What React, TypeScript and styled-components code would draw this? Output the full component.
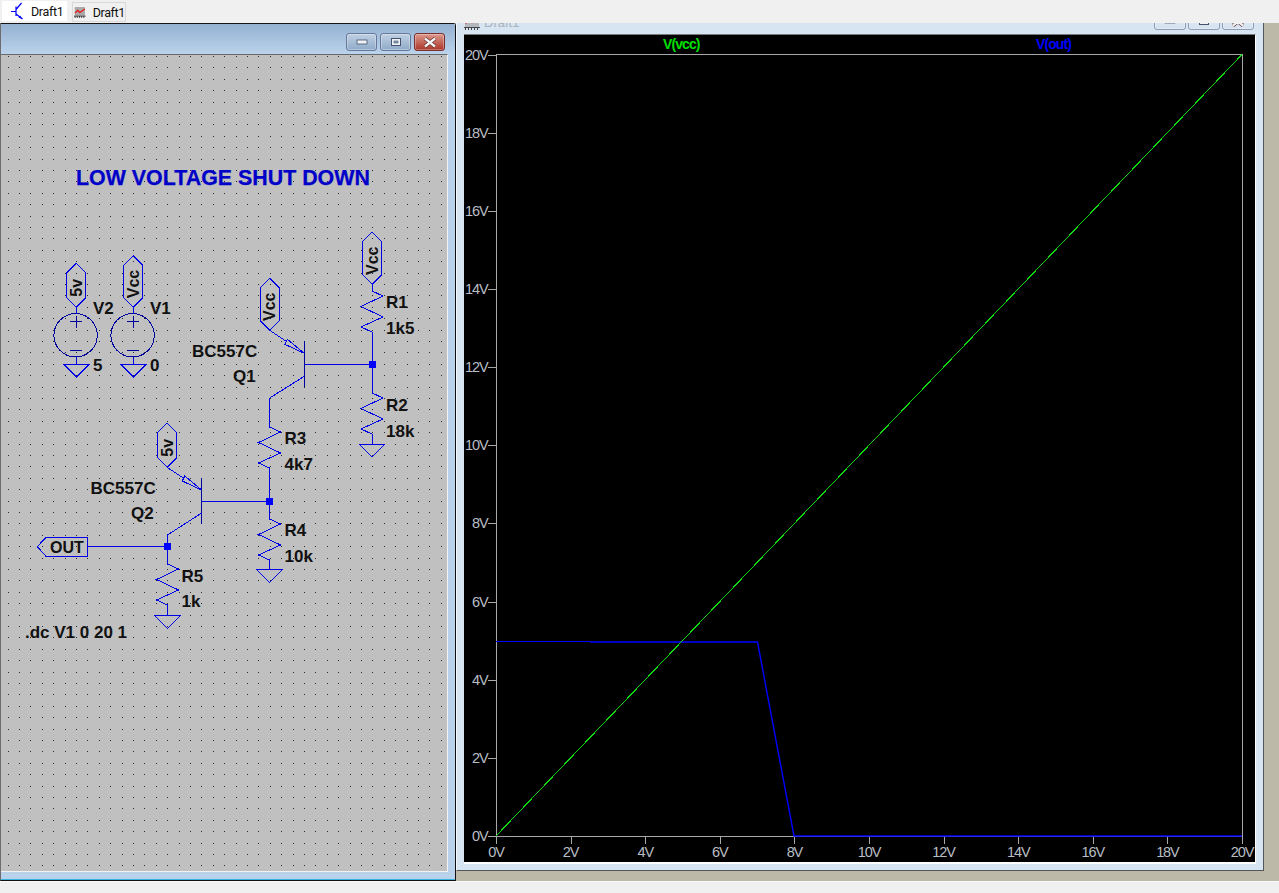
import React from 'react';
import styled, { createGlobalStyle } from 'styled-components';

const GlobalStyle = createGlobalStyle`
    html, body {
        margin: 0;
        padding: 0;
        background: #f0f0f0;
    }
    body {
        font-family: "Liberation Sans", Arial, sans-serif;
    }
`;

const BLUE = '#0000e6';

const Page = styled.div`
    width: 1279px;
    height: 893px;
    display: flex;
    flex-direction: column;
    overflow: hidden;
    background: #f0f0f0;
`;

const TabBar = styled.div`
    height: 23px;
    flex: none;
    display: flex;
    align-items: flex-start;
    gap: 5px;
    padding: 1px 0 0 2px;
    box-sizing: border-box;
    background: #f0f0f0;
    position: relative;
    z-index: 2;
`;

const Tab = styled.div<{ $active?: boolean }>`
    height: 20px;
    width: ${props => (props.$active ? '65px' : '54px')};
    margin-top: ${props => (props.$active ? '0' : '1px')};
    display: flex;
    align-items: center;
    gap: ${props => (props.$active ? '6px' : '7px')};
    padding-left: ${props => (props.$active ? '9px' : '1px')};
    box-sizing: border-box;
    background: ${props => (props.$active ? '#ffffff' : '#f0f0f0')};
    border: ${props => (props.$active ? 'none' : '1px solid #d9d9d9')};
    font-family: Roboto, "Liberation Sans", sans-serif;
    font-size: 12.5px;
    letter-spacing: -0.35px;
    color: #111;
`;

const Workspace = styled.div`
    height: 858px;
    flex: none;
    display: flex;
    align-items: flex-start;
    background: #bdb9a8;
`;

const StatusBar = styled.div`
    flex: 1;
    background: #f0f0f0;
    border-top: 1px solid #fafafa;
`;

const SchematicWindow = styled.div`
    width: 456px;
    height: 858px;
    flex: none;
    display: flex;
    flex-direction: column;
    box-sizing: border-box;
    background: #b9d1ea;
    border-top: 1px solid #141414;
    border-right: 1px solid #101010;
    border-bottom: 1px solid #101010;
    border-left: 1px solid #6d6d6d;
    border-top-right-radius: 3px;
    box-shadow: inset 0 -1px 0 #35b4e0;
`;

const TitleBar = styled.div`
    height: 30px;
    flex: none;
    display: flex;
    justify-content: flex-end;
    align-items: flex-start;
    gap: 3px;
    padding: 9px 10px 0 0;
    box-sizing: border-box;
    background: linear-gradient(#95b1d1, #bbd3eb);
`;

const Canvas = styled.div`
    width: 446px;
    height: 816px;
    flex: none;
    box-sizing: content-box;
    background: #c0c0c0;
    border-top: 1px solid #6a6a6a;
    border-bottom: 1px solid #f2f2f2;
    border-right: 1px solid #f2f2f2;

    svg {
        display: block;
    }
`;

const tones = {
    normal: { top: '#c0d0e3', bottom: '#8fabc9', edge: '#66799a' },
    close: { top: '#dc9a8c', bottom: '#ac3527', edge: '#77302f' },
    faded: { top: '#e6eef7', bottom: '#d5e1ef', edge: '#8d9cb4' },
};

const WindowButton = styled.div<{ $tone: keyof typeof tones }>`
    width: ${props => (props.$tone === 'faded' ? '32px' : '31px')};
    height: 18px;
    flex: none;
    display: flex;
    align-items: center;
    justify-content: center;
    box-sizing: border-box;
    border-radius: 3px;
    border: 1px solid ${props => tones[props.$tone].edge};
    background: linear-gradient(${props => tones[props.$tone].top}, ${props => tones[props.$tone].bottom});
    box-shadow: inset 0 0 0 1px rgba(255, 255, 255, 0.3);
`;

const PlotWindow = styled.div`
    width: 808px;
    height: 848px;
    flex: none;
    display: flex;
    flex-direction: column;
    box-sizing: border-box;
    padding: 0 7px 7px 7px;
    background: #d7e4f2;
    border-left: 1px solid #f4f8fc;
    border-right: 1px solid #55565a;
    border-bottom: 1px solid #55565a;
`;

const PlotTitle = styled.div`
    height: 11px;
    flex: none;
    display: flex;
    align-items: flex-end;
    overflow: hidden;
`;

const PlotCaption = styled.div`
    display: flex;
    align-items: center;
    gap: 4px;
    height: 16px;
    margin-bottom: 4px;
    font-size: 13px;
    color: #a9b2bc;
`;

const PlotButtons = styled.div`
    display: flex;
    gap: 2px;
    margin: 0 2px 4px auto;
`;

const PlotCanvas = styled.div`
    width: 791px;
    height: 827px;
    flex: none;
    background: #000;
    border-top: 1px solid #77797c;
    border-right: 1px solid #fff;
    border-bottom: 2px solid #fff;

    svg {
        display: block;
    }
`;

const Part = styled.text<{ $size?: number }>`
    font-family: "Liberation Sans", Arial, sans-serif;
    font-weight: 700;
    font-size: ${props => props.$size ?? 17}px;
    fill: #111;
`;

const Title = styled.text`
    font-family: "Liberation Sans", Arial, sans-serif;
    font-weight: 700;
    font-size: 21.4px;
    fill: #0000c8;
    stroke: #0000c8;
    stroke-width: 0.25px;
`;

const AxisLabel = styled.text`
    font-family: "Liberation Sans", Arial, sans-serif;
    font-size: 14.5px;
    letter-spacing: -1.1px;
    fill: #b8bec6;
`;

const TraceLabel = styled.text<{ $color: string }>`
    font-family: "Liberation Sans", Arial, sans-serif;
    font-weight: 700;
    font-size: 14px;
    letter-spacing: -0.9px;
    fill: ${props => props.$color};
`;

const Wire = ({ d, width = 1 }: { d: string; width?: number }) => (
    <path d={d} fill="none" stroke={BLUE} strokeWidth={width} />
);

const Junction = ({ x, y }: { x: number; y: number }) => (
    <rect x={x - 3.5} y={y - 3.5} width={7} height={7} fill="#0000ff" />
);

const Ground = ({ x, y }: { x: number; y: number }) => (
    <path d={`M${x - 13} ${y}H${x + 13}L${x} ${y + 13}Z`} fill="none" stroke={BLUE} />
);

// x, y = the top end of the resistor lead
const Resistor = ({ x, y }: { x: number; y: number }) => (
    <Wire
        d={`M${x} ${y}L${x + 11} ${y + 5}L${x - 11} ${y + 15.5}L${x + 11} ${y + 26}L${x - 11} ${y + 36}L${x} ${y + 41}`}
    />
);

const Flag = ({ x, top, bottom, text }: { x: number; top: number; bottom: number; text: string }) => (
    <>
        <path
            d={`M${x} ${top}L${x + 9.5} ${top + 9.5}V${bottom - 9.5}L${x} ${bottom}L${x - 9.5} ${bottom - 9.5}V${top + 9.5}Z`}
            fill="none"
            stroke={BLUE}
        />
        <Part
            $size={16}
            textAnchor="middle"
            transform={`translate(${x + 5.5} ${(top + bottom) / 2 + 2.5}) rotate(-90)`}
        >
            {text}
        </Part>
    </>
);

const Source = ({ x }: { x: number }) => (
    <>
        <circle cx={x - 0.7} cy={335.3} r={21.7} fill="none" stroke="#00009c" />
        <path d={`M${x - 6} 321.5H${x + 6}M${x} 315.5V327.5M${x - 6} 350.5H${x + 6}`} stroke="#00009c" fill="none" />
        <Wire d={`M${x} 307V314M${x} 357V364`} />
        <Ground x={x} y={364} />
    </>
);

const Transistor = ({ x, y, emitX, emitY, collX, collY }: {
    x: number; y: number; emitX: number; emitY: number; collX: number; collY: number;
}) => (
    <>
        <path d={`M${x} ${y - 23}V${y + 23}`} stroke="#00009c" fill="none" />
        <Wire d={`M${emitX} ${emitY}L${x} ${y - 11}M${x} ${y + 12}L${collX} ${collY}`} />
        <path
            d={`M${x} ${y - 11}L${x - 17} ${y - 25}L${x - 19.5} ${y - 20}Z`}
            fill="#c0c0c0"
            stroke={BLUE}
        />
    </>
);

const gridDots = () => {
    let d = '';
    for (let row = 0; row < 72; row++) {
        for (let col = 0; col < 39; col++) {
            d += `M${Math.round(7.6 + col * 11.4)} ${Math.round(56 + row * 11.4)}h1v1h-1z`;
        }
    }
    return d;
};

const Schematic = () => (
    <svg width={446} height={816} viewBox="1 55 446 816" shapeRendering="crispEdges">
        <path d={gridDots()} fill="#2a2a2a" />

        <Title x={76} y={185}>LOW VOLTAGE SHUT DOWN</Title>

        <Flag x={76.3} top={263.3} bottom={307.3} text="5v" />
        <Source x={76.3} />
        <Part x={93} y={314}>V2</Part>
        <Part x={93} y={371}>5</Part>

        <Flag x={133.3} top={255.7} bottom={307.3} text="Vcc" />
        <Source x={133.3} />
        <Part x={150} y={314}>V1</Part>
        <Part x={150} y={371}>0</Part>

        <Flag x={372} top={232.3} bottom={284.3} text="Vcc" />
        <Wire d="M372 284V291M372 332V393M372 434V444" />
        <Resistor x={372} y={291} />
        <Resistor x={372} y={393} />
        <Ground x={372} y={444} />
        <Junction x={372} y={364} />
        <Part x={386} y={308}>R1</Part>
        <Part x={386} y={334}>1k5</Part>
        <Part x={386} y={411}>R2</Part>
        <Part x={386} y={437}>18k</Part>

        <Flag x={269.7} top={278.3} bottom={330.3} text="Vcc" />
        <Transistor x={304.3} y={364.3} emitX={269.7} emitY={330.3} collX={269.7} collY={398} />
        <Wire d="M304.3 364.3H372M269.7 398V427M269.5 468V519M269.5 560V569" />
        <Part x={192} y={357}>BC557C</Part>
        <Part x={233} y={382}>Q1</Part>
        <Resistor x={269.5} y={427} />
        <Part x={284.5} y={444}>R3</Part>
        <Part x={284.5} y={470}>4k7</Part>

        <Junction x={269.5} y={501} />
        <Resistor x={269.5} y={519} />
        <Ground x={269.5} y={569.5} />
        <Part x={284.5} y={536}>R4</Part>
        <Part x={284.5} y={562}>10k</Part>

        <Flag x={167} top={423.3} bottom={467.3} text="5v" />
        <Transistor x={201.7} y={501} emitX={167} emitY={467.3} collX={167.5} collY={535} />
        <Wire d="M201.7 501H269.5M167.5 535V564M87.7 546.5H167.5M167.5 605V616" />
        <Part x={90.5} y={494}>BC557C</Part>
        <Part x={131} y={519}>Q2</Part>

        <Junction x={167.5} y={546.5} />
        <Resistor x={167.5} y={564} />
        <Ground x={167.5} y={615.5} />
        <Part x={181.5} y={582}>R5</Part>
        <Part x={181.5} y={607}>1k</Part>

        <path d="M37.3 546.7L46 537.3H87.7V556.3H46Z" fill="none" stroke={BLUE} />
        <Part $size={16} x={50} y={553}>OUT</Part>

        <Part x={25} y={638}>.dc V1 0 20 1</Part>
    </svg>
);

const PLOT_LEFT = 496;
const PLOT_RIGHT = 1242;
const PLOT_TOP = 54.5;
const PLOT_BOTTOM = 836;
const volts = Array.from({ length: 11 }, (_, i) => i * 2);

const Plot = () => (
    <svg width={791} height={827} viewBox="464 35 791 827">
        <g stroke="#a8a8a8" fill="none" shapeRendering="crispEdges">
            <rect x={PLOT_LEFT} y={PLOT_TOP} width={PLOT_RIGHT - PLOT_LEFT} height={PLOT_BOTTOM - PLOT_TOP} />
            {volts.map(v => {
                const x = Math.round(PLOT_LEFT + (v / 20) * (PLOT_RIGHT - PLOT_LEFT));
                const y = Math.round(PLOT_BOTTOM - (v / 20) * (PLOT_BOTTOM - PLOT_TOP));
                return (
                    <path key={v} d={`M${x} ${PLOT_BOTTOM}v8M${PLOT_LEFT} ${y}h-8`} />
                );
            })}
        </g>

        {volts.map(v => {
            const x = PLOT_LEFT + (v / 20) * (PLOT_RIGHT - PLOT_LEFT);
            const y = PLOT_BOTTOM - (v / 20) * (PLOT_BOTTOM - PLOT_TOP);
            return (
                <React.Fragment key={v}>
                    <AxisLabel x={x} y={857} textAnchor="middle">{v}V</AxisLabel>
                    <AxisLabel x={487.5} y={y + 5} textAnchor="end">{v}V</AxisLabel>
                </React.Fragment>
            );
        })}

        <TraceLabel x={663} y={49} $color="#00e000">V(vcc)</TraceLabel>
        <TraceLabel x={1036} y={49} $color="#0000ff">V(out)</TraceLabel>

        <g fill="none" stroke="#0000ff">
            <path d="M496 641.5H590" shapeRendering="crispEdges" />
            <path d="M590 642H757.5L794 836H1242" strokeWidth={1.4} />
        </g>
        <path d="M496 836L1242 54.5" stroke="#10d810" fill="none" shapeRendering="crispEdges" />
    </svg>
);

const SchematicIcon = () => (
    <svg width={14} height={18} viewBox="0 0 14 18">
        <path
            d="M0 9.5H5M5 4.5V14M5 7.5L10.5 1M5 12L11.5 17"
            stroke="#0000ff"
            strokeWidth={1.2}
            fill="none"
        />
        <path d="M9 13.5L11.5 17L7.5 15.5Z" fill="#0000ff" />
    </svg>
);

const PlotIcon = ({ faded }: { faded?: boolean }) => (
    <svg width={16} height={15} viewBox="0 0 16 15" opacity={faded ? 0.75 : 1}>
        <rect x={1} y={0} width={14} height={12} fill="#a9a9a9" />
        <path d="M1.5 8.5L5 4.5L8 7.5L11 5.5L15 2.5" stroke="#ee1010" strokeWidth={1.6} fill="none" />
        <path d="M0 12.5H16M1.5 12.5V15M4.5 12.5V15M7.5 12.5V15M10.5 12.5V15M13.5 12.5V15" stroke="#111" fill="none" />
    </svg>
);

const MinimizeGlyph = () => (
    <svg width={12} height={6} viewBox="0 0 12 6">
        <rect x={1} y={1} width={10} height={4} fill="#eef2f7" stroke="#45526a" strokeWidth={0.8} />
    </svg>
);

const MaximizeGlyph = () => (
    <svg width={12} height={10} viewBox="0 0 12 10">
        <rect x={1.5} y={1.5} width={9} height={7} fill="#eef2f7" stroke="#45526a" />
        <rect x={4} y={4} width={4} height={2} fill="#8fa6c2" stroke="#45526a" strokeWidth={0.6} />
    </svg>
);

const CloseGlyph = () => (
    <svg width={16} height={11} viewBox="0 0 16 11">
        <path d="M3 1.5L13 9.5M13 1.5L3 9.5" stroke="#5b2a2a" strokeWidth={3.6} />
        <path d="M3 1.5L13 9.5M13 1.5L3 9.5" stroke="#f2f2f2" strokeWidth={2.4} />
    </svg>
);

const App = () => (
    <Page>
        <GlobalStyle />
        <TabBar>
            <Tab $active>
                <SchematicIcon />
                <span>Draft1</span>
            </Tab>
            <Tab>
                <PlotIcon />
                <span>Draft1</span>
            </Tab>
        </TabBar>
        <Workspace>
            <SchematicWindow>
                <TitleBar>
                    <WindowButton $tone="normal"><MinimizeGlyph /></WindowButton>
                    <WindowButton $tone="normal"><MaximizeGlyph /></WindowButton>
                    <WindowButton $tone="close"><CloseGlyph /></WindowButton>
                </TitleBar>
                <Canvas>
                    <Schematic />
                </Canvas>
            </SchematicWindow>
            <PlotWindow>
                <PlotTitle>
                    <PlotCaption>
                        <PlotIcon faded />
                        <span>Draft1</span>
                    </PlotCaption>
                    <PlotButtons>
                        <WindowButton $tone="faded"><MinimizeGlyph /></WindowButton>
                        <WindowButton $tone="faded"><MaximizeGlyph /></WindowButton>
                        <WindowButton $tone="faded"><CloseGlyph /></WindowButton>
                    </PlotButtons>
                </PlotTitle>
                <PlotCanvas>
                    <Plot />
                </PlotCanvas>
            </PlotWindow>
        </Workspace>
        <StatusBar />
    </Page>
);

export default App;
